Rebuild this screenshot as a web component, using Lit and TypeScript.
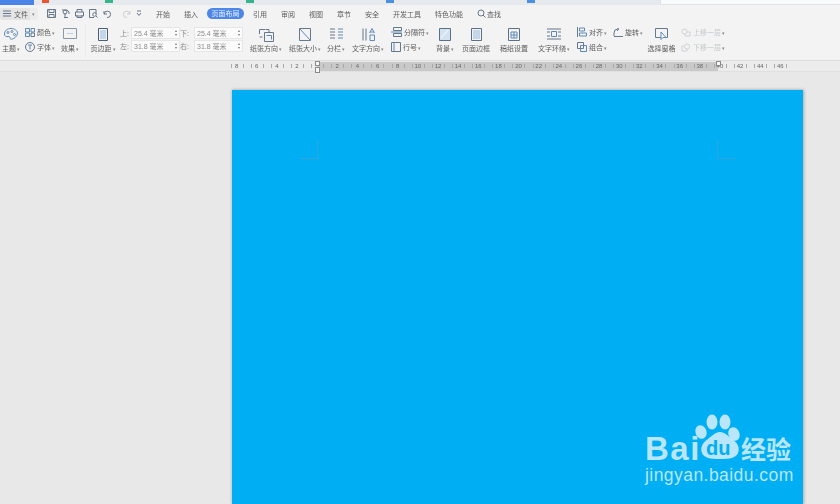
import { LitElement, css, html, svg } from 'lit';
import { customElement } from 'lit/decorators.js';

const menuItems = ['开始', '插入', '页面布局', '引用', '审阅', '视图', '章节', '安全', '开发工具', '特色功能'];
const rulerLeft = [8, 6, 4, 2];
const rulerRight = [2, 4, 6, 8, 10, 12, 14, 16, 18, 20, 22, 24, 26, 28, 30, 32, 34, 36, 38, 40, 42, 44, 46];

const icon = (w: number, h: number, body: unknown) =>
  html`<svg class="ico" width=${w} height=${h} viewBox="0 0 ${w} ${h}" fill="none" stroke="#66788c" stroke-width="1">${body}</svg>`;

const icons = {
  menu: icon(8, 7, svg`<path d="M0 1h8M0 3.500h8M0 6h8"/>`),
  save: icon(9, 9, svg`<path d="M.5.5h8v8h-8zM2 .5v3h5v-3M2 8.500v-3h5v3"/>`),
  clip: icon(9, 9, svg`<path d="M1 1h5l2 2v2M3 8.500h4M4 4v4"/><circle cx="4" cy="3" r="2"/>`),
  print: icon(9, 9, svg`<path d="M2 3V.5h5V3M.5 3h8v4h-8zM2 6v2.500h5V6"/>`),
  preview: icon(9, 9, svg`<path d="M7 5V.5H.5v8H5"/><circle cx="5.500" cy="5.500" r="1.800"/><path d="M7 7l1.500 1.500"/>`),
  undo: icon(9, 8, svg`<path d="M1 1v3h3M1.200 4A3.200 3.200 0 1 1 4 7.500"/>`),
  redo: icon(9, 8, svg`<path stroke="#c9ced4" d="M8 1v3H5M7.800 4A3.200 3.200 0 1 0 5 7.500"/>`),
  more: icon(6, 7, svg`<path d="M1 1h4M1 3l2 2.500L5 3"/>`),
  search: icon(9, 9, svg`<circle cx="4" cy="4" r="3"/><path d="M6 6l2.500 2.500"/>`),
  theme: icon(14, 12, svg`<path stroke="#5f89b8" d="M7 .5C3 .5.500 3 .500 6c0 2.500 2 3 3.500 2.500 1.500-.5 2 .5 2 1.500s1 1.500 2.500 1 5-2.500 5-6C13.500 2.500 10.500.5 7 .5z"/><circle cx="4" cy="4.500" r="1" stroke="#5f89b8"/><circle cx="8" cy="3.500" r="1" stroke="#5f89b8"/><circle cx="10.500" cy="6.500" r="1" stroke="#5f89b8"/>`),
  colors: icon(10, 9, svg`<path stroke="#5f89b8" d="M.5.5h4v3.500h-4zM6 .5h3.500v3.500H6zM.5 5h4v3.500h-4z"/><path d="M6 5h3.500v3.500H6z"/>`),
  font: icon(10, 10, svg`<circle cx="5" cy="5" r="4.500"/><path stroke="#5f89b8" d="M3 3h4M5 3v4.500"/>`),
  effect: icon(14, 11, svg`<path stroke="#8a99a8" d="M.5.5h13v10H.5z"/><path stroke="#b6d0e8" d="M4 5.500h6"/>`),
  margins: icon(10, 13, svg`<path stroke="#4d6072" d="M.5.5h9v12h-9z"/><path stroke="none" fill="#c3d6ea" d="M2 2h6v9H2z"/>`),
  orient: icon(15, 14, svg`<path d="M5.500 4.500h9v9h-9zM.5 6V1.500h6"/><path d="M.5 9h3M10 4.500V1.500h-3"/><path stroke="#5f89b8" d="M7.500 7.500h5v4"/>`),
  size: icon(12, 13, svg`<path d="M.5.5h11v12H.5z"/><path stroke="#5f89b8" d="M1 1l10 11"/>`),
  cols: icon(13, 12, svg`<path d="M0 1h5M0 4h5M0 7h5M0 10h5"/><path stroke="#5f89b8" d="M8 1h5M8 4h5M8 7h5M8 10h5"/>`),
  textdir: icon(13, 13, svg`<path d="M1 .5v12M4 .5v12"/><path stroke="#5f89b8" d="M7.500 5l2.500-4.500L12.500 5M8 4h4M8 7h4.500v5.500H8z"/>`),
  breaks: icon(11, 10, svg`<path d="M2.500.5h8v3h-8zM2.500 6.500h8v3h-8z"/><path stroke="#5f89b8" d="M0 5h11"/>`),
  lines: icon(10, 10, svg`<path d="M.5.5h9v9h-9z"/><path stroke="#5f89b8" d="M3 .5v9"/>`),
  bg: icon(12, 13, svg`<path stroke="#5d7186" fill="#d3e2f1" d="M.5.5h11v12H.5z"/><path stroke="#fff" d="M2 10l7-8"/>`),
  border: icon(11, 13, svg`<path stroke="#5d7186" d="M.5.5h10v12H.5z"/><path stroke="none" fill="#c3d6ea" d="M2 2h7v9H2z"/>`),
  grid: icon(12, 13, svg`<path stroke="#5d7186" d="M.5.5h11v12H.5z"/><path stroke="#5f89b8" d="M3 4h6v6H3zM6 4v6M3 7h6"/>`),
  wrap: icon(14, 12, svg`<path d="M0 1h14M0 11h14M0 4h3M11 4h3M0 8h3M11 8h3"/><path stroke="#5f89b8" d="M4.500 3.500h5v5h-5z"/>`),
  align: icon(10, 10, svg`<path d="M.5 0v10"/><path stroke="#5f89b8" d="M2.500 1h5v3h-5zM2.500 6h7v3h-7z"/>`),
  group: icon(10, 10, svg`<path d="M.5.5h6v6h-6z"/><path stroke="#5f89b8" d="M3.500 3.500h6v6h-6z"/>`),
  rotate: icon(10, 9, svg`<path d="M1 8.500h9M1 8V5a4 4 0 0 1 4-4"/><path stroke="#5f89b8" d="M4 0l2 1-2 2"/>`),
  pane: icon(13, 12, svg`<path d="M.5.5h12v9H.5z"/><path stroke="#5f89b8" fill="#fff" d="M6 4v7.500l2-2h3z"/>`),
  up: icon(10, 9, svg`<g stroke="#cdd2d8"><circle cx="3.500" cy="3.500" r="2.500"/><path d="M6 4h3v4H4V6"/></g>`),
  down: icon(10, 9, svg`<g stroke="#cdd2d8"><circle cx="6" cy="3.500" r="2.500"/><path d="M3 3H1v5h5V6"/></g>`),
};

@customElement('app-root')
export class AppRoot extends LitElement {
  static styles = css`
    :host {
      display: block;
      width: 840px;
      height: 504px;
      overflow: hidden;
      background: #e8e8e8;
      font-family: "Liberation Sans", "Noto Sans CJK SC", sans-serif;
      font-size: 7px;
      color: #5c5c5c;
    }
    .ico { display: block; flex: none; }
    .soft { filter: blur(0.35px); }

    .tabs {
      display: grid;
      grid-template-columns: 34px 8px 7px 56px 8px 133px 8px 132px 8px 133px 8px 125px 1fr;
      height: 5px;
      background: #e6e9ee;
    }
    .tabs .active { background: #4a84e8; }
    .tabs .red { background: #e9552f; height: 3px; }
    .tabs .green { background: #35b58a; height: 3px; }
    .tabs .blue { background: #4a8fe0; height: 3px; }
    .tabs .box { background: #fafbfc; height: 4px; border: solid #e0e3e8; border-width: 0 0 1px 1px; }

    .menu {
      display: flex;
      align-items: center;
      height: 17px;
      background: #f3f3f3;
    }
    .file {
      display: flex;
      align-items: center;
      gap: 3px;
      width: 38px;
      height: 12px;
      padding-left: 3px;
      box-sizing: border-box;
      background: linear-gradient(90deg, #e4e4e4 30px, #ececec 30px);
      border-radius: 2px;
    }
    .quick {
      display: flex;
      align-items: center;
      gap: 5px;
      width: 116px;
      padding-left: 9px;
      box-sizing: border-box;
    }
    .quick .wide { margin-left: 5px; }
    .tabs-row { display: flex; align-items: center; gap: 14px; margin-left: 2px; }
    .tabs-row span { white-space: nowrap; }
    .tabs-row .on {
      margin: 0 -5px;
      padding: 0 4.500px;
      height: 11px;
      line-height: 11px;
      border-radius: 6px;
      background: #4d86e6;
      color: #e8f0ff;
    }
    .find { display: flex; align-items: center; gap: 1px; }

    .ribbon {
      display: grid;
      grid-template-columns: 22px 36px 24px 6px 30px 128px 40px 38px 24px 40px 44px 26px 36px 40px 40px 36px 35px 33px 52px 1fr;
      height: 39px;
      background: #f3f3f3;
      border-bottom: 1px solid #dcdcdc;
      box-sizing: border-box;
    }
    .big {
      display: flex;
      flex-direction: column;
      align-items: center;
      justify-content: space-between;
      padding: 6px 0 7px;
      white-space: nowrap;
      box-sizing: border-box;
    }
    .stack {
      display: flex;
      flex-direction: column;
      gap: 5px;
      padding: 5px 0 0 3px;
      box-sizing: border-box;
    }
    .line { display: flex; align-items: center; gap: 2px; height: 10px; white-space: nowrap; }
    .off { color: #c4c8cc; }
    .caret { color: #888; margin-left: 1px; font-size: 5px; }
    .sep { width: 1px; height: 34px; margin: 2px 0 0 3px; background: #ececec; }
    .inputs {
      display: grid;
      grid-template-columns: 11px 49px 14px 49px;
      grid-auto-rows: 12px;
      row-gap: 1px;
      padding: 5px 0 0 2px;
      align-items: center;
    }
    .inputs label { color: #8a8a8a; }
    .field {
      display: flex;
      justify-content: space-between;
      align-items: center;
      height: 12px;
      padding: 0 2px;
      box-sizing: border-box;
      background: #fbfbfb;
      border: 1px solid #e6e6e6;
      color: #8a8a8a;
    }
    .spin { font-size: 4px; line-height: 4px; color: #777; }

    .ruler {
      display: flex;
      height: 11px;
      padding-left: 226.500px;
      background: linear-gradient(#c9c9c9, #c9c9c9) 317px 1px / 401px 9px no-repeat, #ececec;
      border-bottom: 1px solid #e0e0e0;
      box-sizing: border-box;
      position: relative;
      font-size: 6px;
      color: #666;
    }
    .ruler span {
      flex: none;
      width: 20.150px;
      text-align: center;
      line-height: 10px;
      background:
        linear-gradient(#aaa, #aaa) 4px 3px / 1px 4px no-repeat,
        linear-gradient(#aaa, #aaa) 16px 3px / 1px 4px no-repeat;
    }
    .pin {
      position: absolute;
      top: 0;
      width: 5px;
      height: 5px;
      border: 1px solid #8a8a8a;
      box-sizing: border-box;
      background: #f8f8f8;
    }
    .pin.low { top: 6px; height: 6px; }
    .pin.a { left: 315px; }
    .pin.b { left: 716px; }

    .work { display: flex; height: 432px; padding: 18px 0 0 232px; box-sizing: border-box; }
    .page {
      position: relative;
      width: 571px;
      height: 414px;
      background: #00aef3;
      box-shadow: 0 0 3px #b5b5b5, 1px 0 3px #b5b5b5;
    }
    .crop { position: absolute; top: 50px; width: 17px; height: 18px; border: solid #34a3d8; }
    .crop.l { left: 68px; border-width: 0 1px 1px 0; }
    .crop.r { left: 485px; border-width: 0 0 1px 1px; }

    .mark-baidu { position: absolute; left: 413px; top: 324px; width: 150px; height: 72px; color: #b9e6fb; }
    .bai { position: absolute; left: 0; top: 19px; font-size: 33px; font-weight: bold; line-height: 32px; letter-spacing: 1.500px; }
    .paw { position: absolute; left: 48px; top: 0; }
    .du { position: absolute; left: 61px; top: 24px; font-size: 20px; font-weight: bold; line-height: 20px; color: #00aef3; }
    .jy { position: absolute; left: 96px; top: 21px; font-size: 25px; font-weight: bold; line-height: 30px; white-space: nowrap; }
    .url { position: absolute; left: 0; top: 51px; font-size: 17.500px; line-height: 20px; letter-spacing: .45px; white-space: nowrap; }
  `;

  private big(ic: unknown, label: string, caret = false) {
    return html`<div class="big">${ic}<span>${label}${caret ? html`<span class="caret">▾</span>` : null}</span></div>`;
  }

  private line(ic: unknown, label: string, off = false) {
    return html`<div class="line ${off ? 'off' : ''}">${ic}<span>${label}<span class="caret">▾</span></span></div>`;
  }

  private field(value: string) {
    return html`<div class="field"><span>${value}</span><span class="spin">▴<br />▾</span></div>`;
  }

  render() {
    return html`
      <div class="tabs">
        <i class="active"></i><i></i><i class="red"></i><i></i><i class="green"></i><i></i><i class="green"></i><i></i
        ><i class="blue"></i><i></i><i class="blue"></i><i></i><i class="box"></i>
      </div>

      <div class="menu soft">
        <div class="file">${icons.menu}<span>文件</span><span class="caret">▾</span></div>
        <div class="quick">
          ${icons.save}${icons.clip}${icons.print}${icons.preview}${icons.undo}
          <span class="wide">${icons.redo}</span>${icons.more}
        </div>
        <div class="tabs-row">
          ${menuItems.map((m) => html`<span class=${m === '页面布局' ? 'on' : ''}>${m}</span>`)}
          <span class="find">${icons.search}查找</span>
        </div>
      </div>

      <div class="ribbon soft">
        ${this.big(icons.theme, '主题', true)}
        <div class="stack">${this.line(icons.colors, '颜色')}${this.line(icons.font, '字体')}</div>
        ${this.big(icons.effect, '效果', true)}
        <div class="sep"></div>
        ${this.big(icons.margins, '页边距', true)}
        <div class="inputs">
          <label>上:</label>${this.field('25.4 毫米')}<label>下:</label>${this.field('25.4 毫米')}
          <label>左:</label>${this.field('31.8 毫米')}<label>右:</label>${this.field('31.8 毫米')}
        </div>
        ${this.big(icons.orient, '纸张方向', true)}
        ${this.big(icons.size, '纸张大小', true)}
        ${this.big(icons.cols, '分栏', true)}
        ${this.big(icons.textdir, '文字方向', true)}
        <div class="stack">${this.line(icons.breaks, '分隔符')}${this.line(icons.lines, '行号')}</div>
        ${this.big(icons.bg, '背景', true)}
        ${this.big(icons.border, '页面边框')}
        ${this.big(icons.grid, '稿纸设置')}
        ${this.big(icons.wrap, '文字环绕', true)}
        <div class="stack">${this.line(icons.align, '对齐')}${this.line(icons.group, '组合')}</div>
        <div class="stack">${this.line(icons.rotate, '旋转')}</div>
        ${this.big(icons.pane, '选择窗格')}
        <div class="stack">${this.line(icons.up, '上移一层', true)}${this.line(icons.down, '下移一层', true)}</div>
      </div>

      <div class="ruler soft">
        ${rulerLeft.map((n) => html`<span>${n}</span>`)}
        <span></span>
        ${rulerRight.map((n) => html`<span>${n}</span>`)}
        <i class="pin a"></i><i class="pin a low"></i><i class="pin b"></i>
      </div>

      <div class="work">
        <div class="page">
          <div class="crop l"></div>
          <div class="crop r"></div>
          <div class="mark-baidu">
            <span class="bai">Bai</span>
            <svg class="paw" width="52" height="48" viewBox="0 0 52 48" fill="#b9e6fb">
              <ellipse cx="8" cy="18" rx="5.500" ry="7" transform="rotate(-20 8 18)" />
              <ellipse cx="19" cy="8" rx="5.500" ry="7.500" />
              <ellipse cx="32" cy="8" rx="5.500" ry="7.500" />
              <ellipse cx="41" cy="20" rx="5.500" ry="7" transform="rotate(-25 41 20)" />
              <path d="M27 18c5 0 8 4 12 7 6 4 8 9 6 14-2 5-8 6-18 6s-16-1-18-6c-2-5 0-10 6-14 4-3 7-7 12-7z" />
            </svg>
            <span class="du">du</span>
            <span class="jy">经验</span>
            <span class="url">jingyan.baidu.com</span>
          </div>
        </div>
      </div>
    `;
  }
}
